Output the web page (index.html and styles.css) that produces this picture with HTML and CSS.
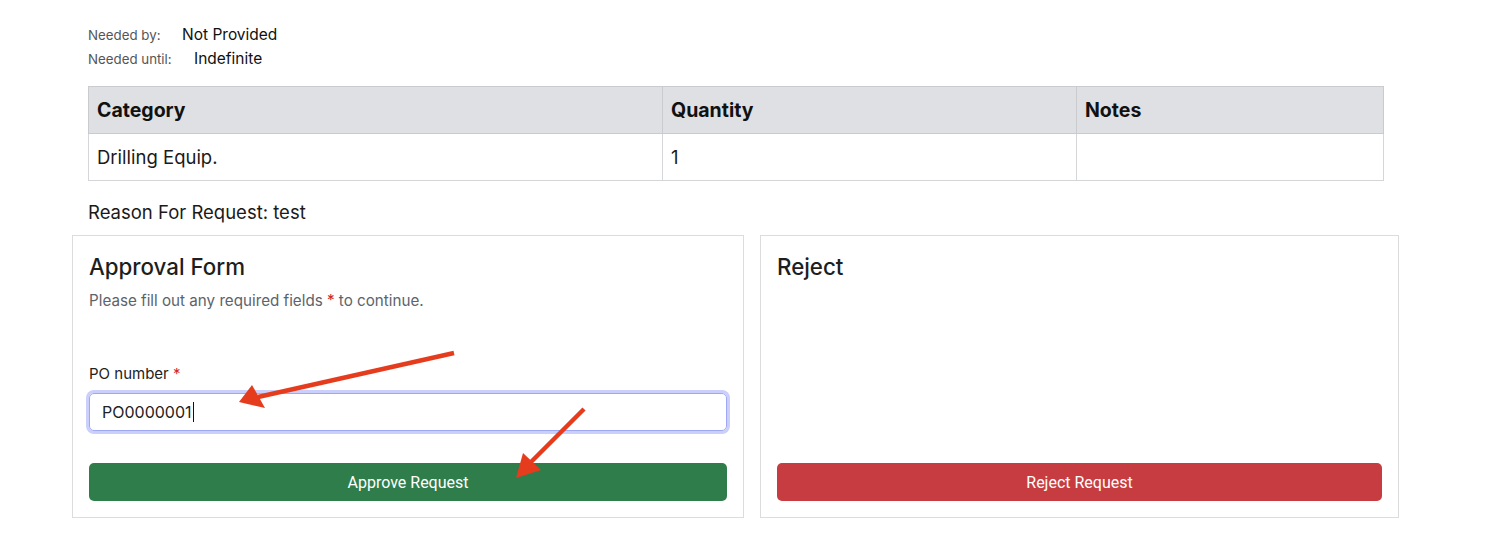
FILE: index.html
```html
<!DOCTYPE html>
<html>
<head>
<meta charset="utf-8">
<link rel="stylesheet" href="styles.css">
</head>
<body>
<div class="page">
  <div class="meta">
    <div class="meta-row"><span class="meta-label">Needed by:</span><span class="meta-value">Not Provided</span></div>
    <div class="meta-row"><span class="meta-label">Needed until:</span><span class="meta-value">Indefinite</span></div>
  </div>
  <table class="items">
    <thead>
      <tr><th class="c1">Category</th><th class="c2">Quantity</th><th class="c3">Notes</th></tr>
    </thead>
    <tbody>
      <tr><td>Drilling Equip.</td><td>1</td><td></td></tr>
    </tbody>
  </table>
  <div class="reason">Reason For Request: test</div>
  <div class="cards">
    <div class="card approve">
      <h2 class="card-title">Approval Form</h2>
      <p class="card-sub">Please fill out any required fields <span class="req">*</span> to continue.</p>
      <label class="field-label">PO number <span class="req">*</span></label>
      <div class="input"><span>PO0000001</span><span class="caret"></span></div>
      <button class="btn btn-green">Approve Request</button>
    </div>
    <div class="card reject">
      <h2 class="card-title">Reject</h2>
      <div class="spacer"></div>
      <button class="btn btn-red">Reject Request</button>
    </div>
  </div>
</div>
<svg class="arrows" width="1490" height="554" viewBox="0 0 1490 554">
  <line x1="454" y1="353" x2="258" y2="397" stroke="#e63c1e" stroke-width="4.5" stroke-linecap="butt"/>
  <polygon points="239,402 252,385 265,408" fill="#e63c1e"/>
  <line x1="584" y1="409" x2="529" y2="464" stroke="#e63c1e" stroke-width="4.5"/>
  <polygon points="516,478 523,453 541,470" fill="#e63c1e"/>
</svg>
</body>
</html>
```
FILE: styles.css
```css
html, body {
  margin: 0;
  padding: 0;
  background: #fff;
}
body {
  font-family: Inter, "Liberation Sans", sans-serif;
  color: #212529;
  position: relative;
  width: 1490px;
  height: 554px;
  overflow: hidden;
}
.page {
  padding: 23px 0 0 88px;
  width: 1295px;
}
.meta-row {
  display: flex;
  align-items: baseline;
  height: 24px;
  line-height: 24px;
}
.meta-label {
  font-size: 13.3px;
  color: #555;
  width: 94px;
}
.meta-row:nth-child(2) .meta-label {
  width: 106px;
}
.meta-value {
  font-size: 15.5px;
  color: #111;
}
.items {
  margin-top: 15px;
  width: 1296px;
  border-collapse: collapse;
  font-size: 18.5px;
}
.items th, .items td {
  border: 1px solid #d4d6d9;
  text-align: left;
  padding: 0 8px;
  height: 46px;
}
.items th {
  background: #dee0e3;
  font-weight: 700;
  font-size: 19.5px;
  color: #111;
  border-color: #c9cbce;
}
.items td {
  color: #1a1a1a;
}
.c1 { width: 557px; }
.c2 { width: 397px; }
.reason {
  font-size: 18.5px;
  margin-top: 20px;
  line-height: 22px;
  color: #1a1a1a;
}
.cards {
  display: flex;
  gap: 16px;
  margin: 12px -16px 0 -16px;
}
.card {
  border: 1px solid #dcdcdc;
  padding: 16px;
  display: flex;
  flex-direction: column;
  height: 249px;
  flex-shrink: 0;
}
.approve { width: 638px; }
.reject { width: 605px; }
.card-title {
  margin: 0;
  font-size: 22.3px;
  font-weight: 500;
  line-height: 30px;
  color: #1e1e1e;
}
.card-sub {
  margin: 9px 0 0 0;
  font-size: 15.2px;
  line-height: 20px;
  color: #5c636a;
}
.req { color: #d0272d; }
.field-label {
  margin-top: 53px;
  font-size: 15px;
  line-height: 20px;
  color: #222;
}
.input {
  margin-top: 9px;
  height: 36px;
  border: 1px solid #9ea8f7;
  border-radius: 5px;
  box-shadow: 0 0 0 3px #cbcffb;
  display: flex;
  align-items: center;
  padding: 0 12px;
  font-size: 16px;
  color: #222;
}
.caret {
  display: inline-block;
  width: 1px;
  height: 20px;
  background: #111;
  margin-left: 1px;
}
.spacer { flex: 1; }
.btn {
  margin-top: auto;
  height: 38px;
  border: none;
  border-radius: 5px;
  color: #fff;
  font-family: Roboto, "Liberation Sans", sans-serif;
  font-size: 16px;
  width: 100%;
}
.btn-green { background: #2f7d4b; }
.btn-red { background: #c73c40; }
.arrows {
  position: absolute;
  left: 0;
  top: 0;
  pointer-events: none;
}
```
